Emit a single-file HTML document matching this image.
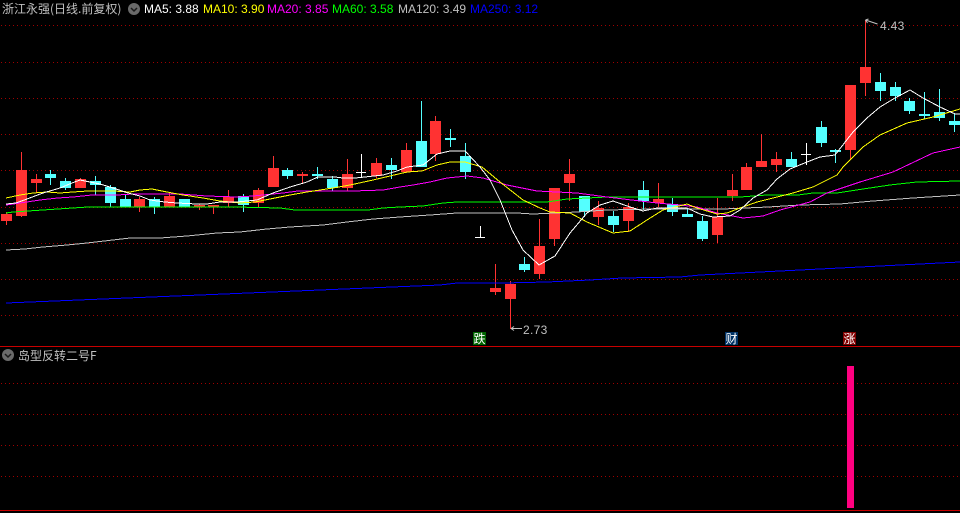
<!DOCTYPE html>
<html><head><meta charset="utf-8"><style>
html,body{margin:0;padding:0;background:#000;width:960px;height:513px;overflow:hidden}
svg{position:absolute;left:0;top:0;display:block}
text{font-family:"Liberation Sans","WenQuanYi Zen Hei","Noto Sans CJK SC",sans-serif;font-size:12px}
.c{font-family:"WenQuanYi Zen Hei","Noto Sans CJK SC","Liberation Sans",sans-serif}
</style></head><body>
<svg width="960" height="513" viewBox="0 0 960 513" xmlns="http://www.w3.org/2000/svg">
<g stroke="#a00000" stroke-width="1" stroke-dasharray="1 3" shape-rendering="crispEdges" fill="none">
<path d="M1 25.5H960M1 62.5H960M1 98.5H960M1 134.5H960M1 170.5H960M1 207.5H960M1 243.5H960M1 279.5H960M1 315.5H960M1 383.5H846M1 414.5H846M1 445.5H846M1 476.5H846M857 383.5H960M857 414.5H960M857 445.5H960M857 476.5H960"/>
</g>
<g fill="none" stroke-width="1" shape-rendering="crispEdges">
<path stroke="#ff3232" d="M6.5 212V225M21.5 152V217M36.5 174V193M80.5 178V188M139.5 197V212M169.5 193V207M199.5 204V210M213.5 205V214M228.5 190V207M258.5 188V207M273.5 156V187M302.5 172V183M347.5 159V191M376.5 158V178M406.5 143V173M435.5 116V161M495.5 264V295M510.5 281V329M539.5 219V279M554.5 188V246M569.5 159V201M598.5 201V225M628.5 203V232M658.5 183V207M717.5 198V243M732.5 174V201M746.5 163V190M761.5 134V167M776.5 152V172M850.5 85V160M865.5 20V96"/>
<path stroke="#54ffff" d="M50.5 170V185M65.5 178V190M95.5 176V195M110.5 185V207M125.5 195V207M154.5 197V214M184.5 199V207M243.5 194V212M287.5 168V179M317.5 167V179M332.5 176V191M391.5 158V179M421.5 101V167M450.5 129V147M465.5 143V179M524.5 257V272M584.5 196V217M613.5 211V232M643.5 181V210M672.5 198V216M687.5 208V217M702.5 216V241M791.5 152V167M821.5 121V147M835.5 149V163M880.5 73V101M895.5 82V101M909.5 98V114M924.5 92V119M939.5 89V121M954.5 113V132"/>
<path stroke="#ffffff" d="M361.5 154V177M480.5 226V237M806.5 143V165"/>
</g>
<path shape-rendering="crispEdges" fill="#ff3232" d="M1 214h11v7h-11zM16 170h11v46h-11zM31 179h11v4h-11zM75 179h11v9h-11zM134 199h11v8h-11zM164 196h11v11h-11zM194 205h11v2h-11zM208 205h11v2h-11zM223 197h11v6h-11zM253 190h11v13h-11zM268 168h11v19h-11zM297 174h11v2h-11zM342 174h11v14h-11zM371 163h11v13h-11zM401 150h11v22h-11zM430 121h11v33h-11zM490 288h11v4h-11zM505 284h11v15h-11zM534 246h11v28h-11zM549 188h11v51h-11zM564 174h11v9h-11zM593 208h11v9h-11zM623 207h11v14h-11zM653 199h11v4h-11zM712 217h11v18h-11zM727 190h11v6h-11zM741 167h11v23h-11zM756 161h11v6h-11zM771 159h11v6h-11zM845 85h11v65h-11zM860 67h11v16h-11z"/>
<path shape-rendering="crispEdges" fill="#54ffff" d="M45 174h11v4h-11zM60 181h11v7h-11zM90 181h11v4h-11zM105 187h11v16h-11zM120 199h11v8h-11zM149 199h11v8h-11zM179 199h11v8h-11zM238 196h11v9h-11zM282 170h11v6h-11zM312 174h11v2h-11zM327 179h11v9h-11zM386 165h11v5h-11zM416 141h11v26h-11zM445 138h11v2h-11zM460 156h11v16h-11zM519 264h11v6h-11zM579 196h11v16h-11zM608 216h11v9h-11zM638 190h11v11h-11zM667 204h11v8h-11zM682 214h11v3h-11zM697 221h11v18h-11zM786 159h11v8h-11zM816 127h11v16h-11zM830 150h11v2h-11zM875 82h11v9h-11zM890 87h11v9h-11zM904 101h11v10h-11zM919 114h11v2h-11zM934 112h11v6h-11zM949 121h11v4h-11z"/>
<path shape-rendering="crispEdges" fill="#ffffff" d="M356 172h10v1h-10zM475 237h10v1h-10zM801 154h10v1h-10z"/>
<g fill="none" stroke-width="1" shape-rendering="crispEdges">
<polyline stroke="#0000ff" points="6,303 200,295 440,285 457,283 503,283 547,282 590,280 622,278 680,277 700,275 960,262"/>
<polyline stroke="#c0c0c0" points="6,250 25,249 43,247 67,245 87,243 130,238 160,238 187,236 217,233 240,232 267,229 290,227 323,225 347,222 373,219 400,217 430,215 457,213 517,213 533,214 577,212 607,210 653,209 723,209 768,207 800,205 840,204 873,201 913,198 960,195"/>
<polyline stroke="#00ff00" points="6,213 13,212 28,211 43,210 58,209 73,208 88,207 235,207 280,208 295,210 368,210 383,208 400,207 423,206 443,203 457,202 547,202 567,199 607,197 740,197 767,195 798,195 813,193 837,193 863,189 890,185 917,182 960,181"/>
<polyline stroke="#ff00ff" points="6,205 20,203 40,200 58,198 73,197 92,195 117,195 133,194 163,194 180,194 207,196 237,197 253,196 283,193 298,191 353,191 383,190 400,187 413,185 430,182 447,178 467,176 483,178 507,185 537,191 577,193 607,197 640,201 657,203 680,205 697,207 717,213 743,218 763,216 780,210 810,202 827,193 860,182 893,172 933,153 960,147"/>
<polyline stroke="#ffff00" points="6,198 20,195 33,193 47,192 60,193 73,192 88,191 113,191 130,192 140,190 152,189 167,192 183,195 203,198 220,201 240,203 255,202 270,199 290,195 307,192 320,190 333,188 350,185 373,180 390,176 407,172 422,171 437,165 450,162 465,162 482,167 500,182 523,200 540,208 550,212 570,213 587,222 613,233 630,231 647,220 663,210 687,204 697,208 717,214 727,213 740,208 757,202 777,197 793,193 813,187 837,175 843,167 863,147 880,135 907,123 933,117 960,109"/>
<polyline stroke="#ffffff" points="6,204 16,203 27,199 43,193 60,188 72,183 80,180 90,182 100,184 113,188 128,193 140,196 150,200 165,202 177,203 197,204 207,204 220,202 237,202 257,200 273,193 290,187 307,182 318,177 335,177 343,178 355,178 365,177 383,175 397,171 407,167 423,165 437,154 450,151 465,151 480,167 490,180 500,200 512,230 523,250 539,265 555,256 570,233 587,213 600,205 613,201 630,207 643,211 657,208 687,208 700,214 713,217 730,216 740,210 753,198 767,190 777,179 790,169 807,162 820,157 835,155 853,132 867,118 880,107 895,98 910,90 923,98 940,107 955,114 960,114"/>
</g>
<rect x="0" y="346" width="960" height="1" fill="#c80000" shape-rendering="crispEdges"/>
<rect x="0" y="510" width="960" height="1" fill="#c80000" shape-rendering="crispEdges"/>
<rect x="847" y="366" width="7" height="142" fill="#ff0080" shape-rendering="crispEdges"/>
<text x="2" y="13" fill="#c0c0c0" class="c">浙江永强(日线.前复权)</text>
<circle cx="134" cy="9" r="6" fill="#6a6a6a"/><path d="M131 8l3 3 3-3" fill="none" stroke="#1a1a1a" stroke-width="1.5"/>
<text x="144" y="13" fill="#ffffff">MA5: 3.88</text>
<text x="203" y="13" fill="#ffff00">MA10: 3.90</text>
<text x="267" y="13" fill="#ff00ff">MA20: 3.85</text>
<text x="332" y="13" fill="#00ff00">MA60: 3.58</text>
<text x="398" y="13" fill="#c0c0c0">MA120: 3.49</text>
<text x="470" y="13" fill="#0000ff">MA250: 3.12</text>
<circle cx="8" cy="355" r="6" fill="#6a6a6a"/><path d="M5 354l3 3 3-3" fill="none" stroke="#1a1a1a" stroke-width="1.5"/>
<text x="18" y="360" fill="#c0c0c0" class="c">岛型反转二号F</text>
<path d="M865.5 20l12 4M865.5 20l3-1M865.5 20l2 3" fill="none" stroke="#c0c0c0" stroke-width="1"/>
<text x="880" y="30" fill="#c0c0c0" letter-spacing=".3">4.43</text>
<path d="M511 328.500h11M511 328.500l3-2M511 328.500l3 2" fill="none" stroke="#c0c0c0" stroke-width="1"/>
<text x="523" y="334" fill="#c0c0c0" letter-spacing=".3">2.73</text>
<rect x="473" y="332" width="13" height="13" fill="#006400"/>
<text x="473.500" y="343" fill="#ffffff" class="c">跌</text>
<rect x="725" y="332" width="13" height="13" fill="#003366"/>
<text x="725.500" y="343" fill="#ffffff" class="c">财</text>
<rect x="843" y="332" width="13" height="13" fill="#800000"/>
<text x="843.500" y="343" fill="#ffffff" class="c">涨</text>
</svg>
</body></html>
